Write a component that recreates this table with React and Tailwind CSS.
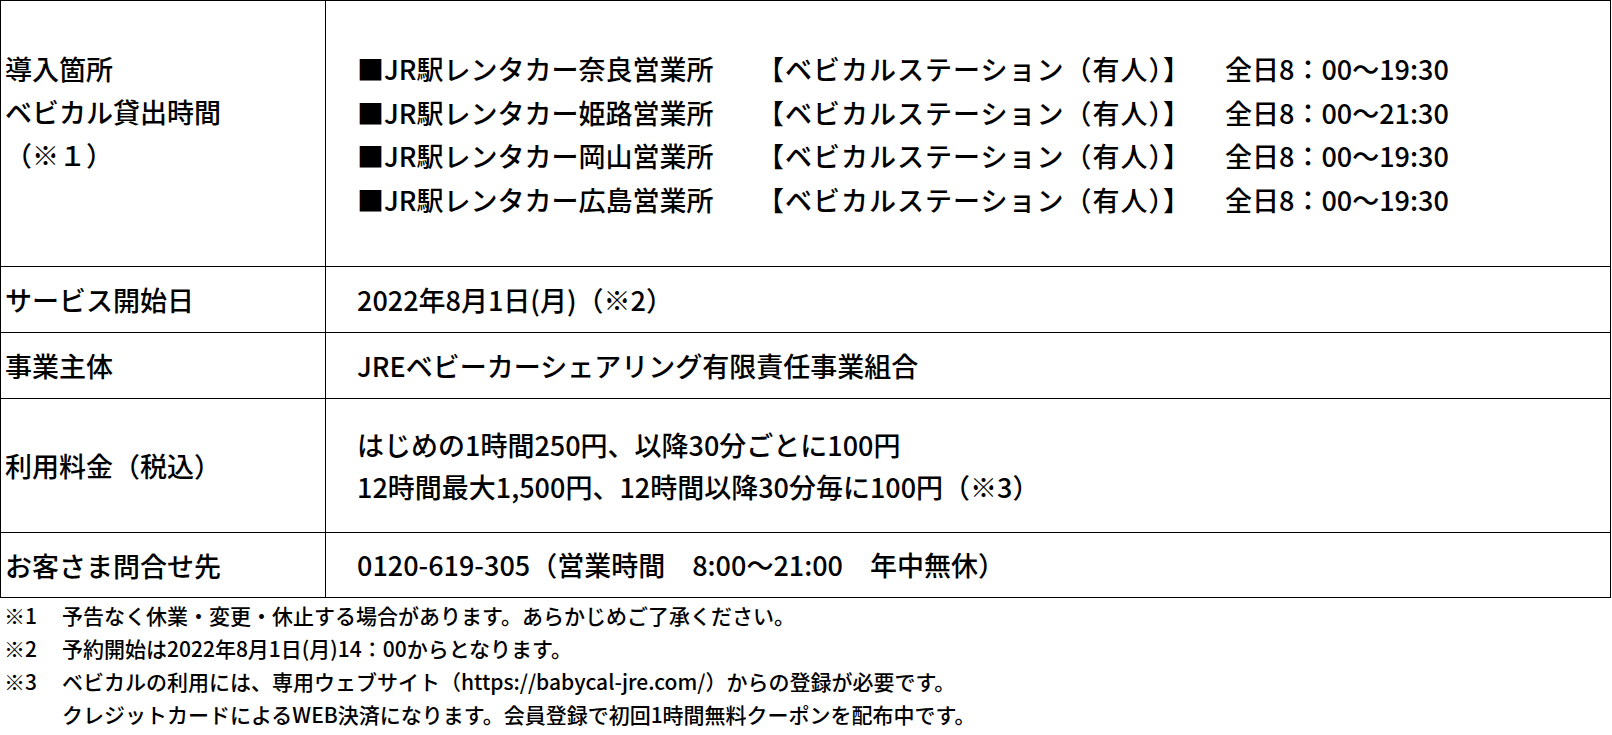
const FONT = { fontFamily: '"Noto Sans CJK JP", "Noto Sans", sans-serif' };

const stations = [
  { name: "■JR駅レンタカー奈良営業所", hours: "全日8：00～19:30" },
  { name: "■JR駅レンタカー姫路営業所", hours: "全日8：00～21:30" },
  { name: "■JR駅レンタカー岡山営業所", hours: "全日8：00～19:30" },
  { name: "■JR駅レンタカー広島営業所", hours: "全日8：00～19:30" },
];

const notes = [
  { mark: "※1", text: "予告なく休業・変更・休止する場合があります。あらかじめご了承ください。" },
  { mark: "※2", text: "予約開始は2022年8月1日(月)14：00からとなります。" },
  { mark: "※3", text: "ベビカルの利用には、専用ウェブサイト（https://babycal-jre.com/）からの登録が必要です。" },
  { mark: "", text: "クレジットカードによるWEB決済になります。会員登録で初回1時間無料クーポンを配布中です。" },
];

function Row({ label, children, height, top }) {
  return (
    <tr style={{ height }}>
      <td
        className={`border border-black pl-[4px] pr-2 text-[27px] leading-[43px] ${top ? "align-top pt-[46px]" : "align-middle"}`}
      >
        {label}
      </td>
      <td
        className={`border border-black pl-[31px] text-[27px] leading-[42px] ${top ? "align-top pt-[46px]" : "align-middle"}`}
      >
        {children}
      </td>
    </tr>
  );
}

export default function App() {
  return (
    <div className="w-[1612px] h-[735px] overflow-hidden bg-white text-black font-medium" style={FONT}>
      <table className="w-[1611px] border-collapse table-fixed">
        <colgroup>
          <col className="w-[325px]" />
          <col />
        </colgroup>
        <tbody>
          <Row
            top
            height={266}
            label={
              <div className="leading-[43px]">
                <div>導入箇所</div>
                <div>ベビカル貸出時間</div>
                <div>（※１）</div>
              </div>
            }
          >
            <div className="leading-[43.5px]">
              {stations.map((s) => (
                <div key={s.name} className="flex whitespace-nowrap">
                  <span className="w-[400px] shrink-0">{s.name}</span>
                  <span className="w-[468px] shrink-0 tracking-[1px]">【ベビカルステーション（有人）】</span>
                  <span>{s.hours}</span>
                </div>
              ))}
            </div>
          </Row>
          <Row height={66} label="サービス開始日">
            2022年8月1日(月)（※2）
          </Row>
          <Row height={66} label="事業主体">
            JREベビーカーシェアリング有限責任事業組合
          </Row>
          <Row height={134} label="利用料金（税込）">
            <div>はじめの1時間250円、以降30分ごとに100円</div>
            <div>12時間最大1,500円、12時間以降30分毎に100円（※3）</div>
          </Row>
          <Row height={65} label="お客さま問合せ先">
            0120-619-305（営業時間　8:00～21:00　年中無休）
          </Row>
        </tbody>
      </table>
      <div className="pt-[1px] text-[21px] leading-[33px]">
        {notes.map((n, i) => (
          <div key={i} className="flex whitespace-nowrap pl-[4px]">
            <span className="w-[58px] shrink-0">{n.mark}</span>
            <span>{n.text}</span>
          </div>
        ))}
      </div>
    </div>
  );
}
